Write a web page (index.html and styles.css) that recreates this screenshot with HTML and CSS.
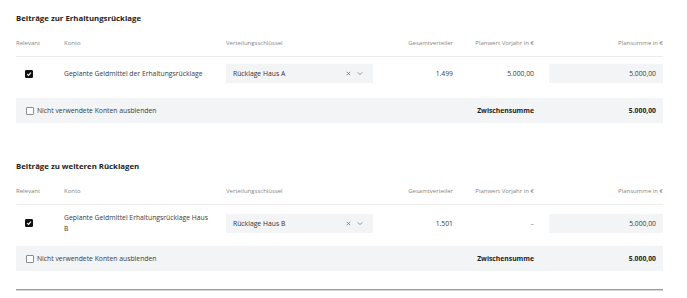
FILE: index.html
```html
<!DOCTYPE html>
<html lang="de">
<head>
    <meta charset="UTF-8">
    <meta name="viewport" content="width=device-width, initial-scale=1.0">
    <title>Rücklagen</title>
    <link rel="stylesheet" href="styles.css">
</head>
<body>
    <div class="section">
        <h2 class="section-title">Beiträge zur Erhaltungsrücklage</h2>
        <div class="grid head-row">
            <div>Relevant</div>
            <div>Konto</div>
            <div>Verteilungsschlüssel</div>
            <div class="num">Gesamtverteiler</div>
            <div class="num">Planwert Vorjahr in €</div>
            <div class="num">Plansumme in €</div>
        </div>
        <div class="grid data-row">
            <div class="cell-check"><span class="checkbox checked"><svg viewBox="0 0 8 8" width="8" height="8"><path d="M2.2 4.2 L3.5 5.4 L5.9 2.6" fill="none" stroke="#fff" stroke-width="1.1"/></svg></span></div>
            <div class="konto">Geplante Geldmittel der Erhaltungsrücklage</div>
            <div class="select">
                <span class="select-value">Rücklage Haus A</span>
                <span class="select-icons">
                    <svg viewBox="0 0 6 6" width="5" height="5"><path d="M1 1 L5 5 M5 1 L1 5" stroke="#666" stroke-width="0.9"/></svg>
                    <svg viewBox="0 0 8 6" width="6" height="5"><path d="M1 1.5 L4 4.5 L7 1.5" fill="none" stroke="#666" stroke-width="0.9"/></svg>
                </span>
            </div>
            <div class="num">1.499</div>
            <div class="num">5.000,00</div>
            <div class="cell-input"><div class="input">5.000,00</div></div>
        </div>
        <div class="grid footer-bar">
            <label class="hide-unused"><span class="checkbox"></span>Nicht verwendete Konten ausblenden</label>
            <div class="num strong">Zwischensumme</div>
            <div class="num strong sum">5.000,00</div>
        </div>
    </div>

    <div class="section">
        <h2 class="section-title">Beiträge zu weiteren Rücklagen</h2>
        <div class="grid head-row">
            <div>Relevant</div>
            <div>Konto</div>
            <div>Verteilungsschlüssel</div>
            <div class="num">Gesamtverteiler</div>
            <div class="num">Planwert Vorjahr in €</div>
            <div class="num">Plansumme in €</div>
        </div>
        <div class="grid data-row">
            <div class="cell-check"><span class="checkbox checked"><svg viewBox="0 0 8 8" width="8" height="8"><path d="M2.2 4.2 L3.5 5.4 L5.9 2.6" fill="none" stroke="#fff" stroke-width="1.1"/></svg></span></div>
            <div class="konto">Geplante Geldmittel Erhaltungsrücklage Haus B</div>
            <div class="select">
                <span class="select-value">Rücklage Haus B</span>
                <span class="select-icons">
                    <svg viewBox="0 0 6 6" width="5" height="5"><path d="M1 1 L5 5 M5 1 L1 5" stroke="#666" stroke-width="0.9"/></svg>
                    <svg viewBox="0 0 8 6" width="6" height="5"><path d="M1 1.5 L4 4.5 L7 1.5" fill="none" stroke="#666" stroke-width="0.9"/></svg>
                </span>
            </div>
            <div class="num">1.501</div>
            <div class="num muted">–</div>
            <div class="cell-input"><div class="input">5.000,00</div></div>
        </div>
        <div class="grid footer-bar">
            <label class="hide-unused"><span class="checkbox"></span>Nicht verwendete Konten ausblenden</label>
            <div class="num strong">Zwischensumme</div>
            <div class="num strong sum">5.000,00</div>
        </div>
    </div>

    <div class="bottom-line"></div>
</body>
</html>
```

FILE: styles.css
```css
body {
    font-family: 'Open Sans', 'Liberation Sans', sans-serif;
    font-size: 6.8px;
    color: #3a3a3a;
    background-color: #fff;
    margin: 0;
    padding: 12px 24px 0 16px;
}
.section {
    margin-bottom: 37px;
}
.section-title {
    font-size: 7.8px;
    font-weight: 700;
    line-height: 12px;
    color: #222;
    margin: 0;
}
.grid {
    display: grid;
    grid-template-columns: 48px 162px 147px 80px 81px 129px;
    align-items: center;
}
.num {
    text-align: right;
}
.head-row {
    font-size: 6px;
    line-height: 10px;
    color: #858585;
    padding: 14px 0 8px;
    border-bottom: 1px solid #ececec;
}
.data-row {
    height: 19px;
    margin-top: 7px;
}
.cell-check {
    padding-left: 9px;
    display: flex;
    align-items: center;
}
.checkbox {
    display: inline-flex;
    width: 8px;
    height: 8px;
    box-sizing: border-box;
    border: 1px solid #8c8c8c;
    border-radius: 1px;
    background-color: #fff;
}
.checkbox.checked {
    background-color: #111;
    border-color: #111;
    align-items: center;
    justify-content: center;
}
.checkbox.checked svg {
    margin: -1px;
}
.konto {
    line-height: 11px;
    padding-right: 16px;
}
.select {
    height: 19px;
    background-color: #f3f4f6;
    display: flex;
    align-items: center;
    justify-content: space-between;
    padding: 0 10px 0 7px;
    box-sizing: border-box;
}
.select-value {
    color: #333;
}
.select-icons {
    display: flex;
    align-items: center;
    gap: 6px;
}
.muted {
    color: #888;
}
.cell-input {
    display: flex;
    justify-content: flex-end;
}
.input {
    width: 114px;
    height: 19px;
    line-height: 19px;
    background-color: #f3f4f6;
    text-align: right;
    padding-right: 7px;
    box-sizing: border-box;
}
.footer-bar {
    margin-top: 15px;
    height: 25px;
    background-color: #f3f4f6;
}
.hide-unused {
    grid-column: 1 / 5;
    display: flex;
    align-items: center;
    gap: 3px;
    padding-left: 10px;
}
.strong {
    font-weight: 700;
    color: #222;
}
.sum {
    padding-right: 7px;
}
.bottom-line {
    height: 1px;
    background-color: #9c9c9c;
    border-bottom: 1px solid #d6d6d6;
    margin-top: -19px;
}
```
